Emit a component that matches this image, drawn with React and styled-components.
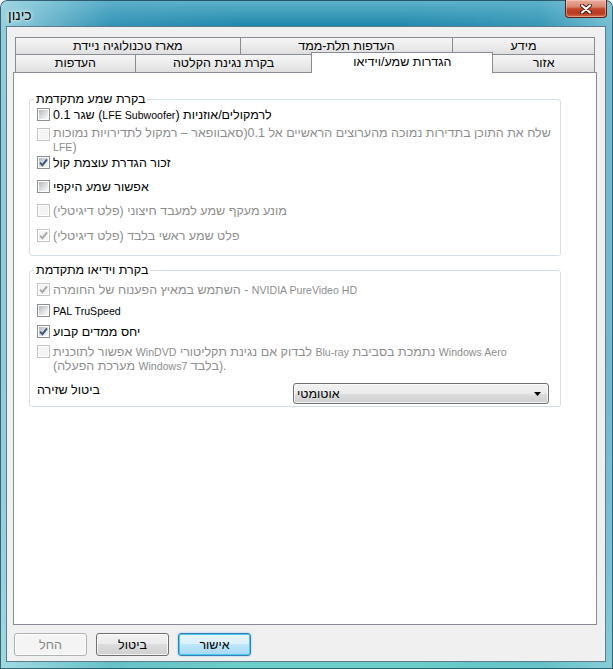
import React from 'react'
import styled, { createGlobalStyle } from 'styled-components'

const GlobalStyle = createGlobalStyle`
  html, body {
    margin: 0;
    padding: 0;
    background: #ffffff;
  }
  body {
    font-family: "Liberation Sans", "DejaVu Sans", sans-serif;
    font-size: 12.5px;
    color: #000000;
  }
`

const Window = styled.div`
  width: 613px;
  height: 669px;
  box-sizing: border-box;
  display: flex;
  flex-direction: column;
  border-radius: 7px 7px 0 0;
  box-shadow: inset 0 0 0 1px rgba(20, 50, 70, 0.7);
  background:
    linear-gradient(90deg, rgba(170, 220, 230, 0.85) 0%, rgba(90, 170, 200, 0.35) 18%, rgba(10, 110, 150, 0) 40%, rgba(10, 110, 150, 0) 65%, rgba(90, 175, 200, 0.4) 88%, rgba(140, 205, 220, 0.8) 100%),
    linear-gradient(180deg, #5fb3cb 0%, #1e86aa 4%, #1b7ea2 30%, #25789c 55%, #3f9fbd 85%, #6fd0c8 100%);
`

const TitleBar = styled.div`
  height: 26px;
  flex: none;
  display: flex;
  justify-content: space-between;
  align-items: flex-start;
  padding: 0 6px 0 8px;
`

const Title = styled.span`
  margin-top: 7px;
  font-size: 14px;
  line-height: 16px;
  color: #000;
  text-shadow: 0 0 6px #ffffff, 0 0 3px rgba(255, 255, 255, 0.9);
`

const CloseButton = styled.div`
  width: 42px;
  height: 18px;
  box-sizing: border-box;
  border: 1px solid #5a2118;
  border-top: none;
  border-radius: 0 0 4px 4px;
  display: flex;
  align-items: center;
  justify-content: center;
  background: linear-gradient(180deg, #e9ad9d 0%, #d9876f 40%, #c2472c 52%, #b53a21 78%, #d66a4c 100%);
  box-shadow: inset 0 0 0 1px rgba(255, 220, 210, 0.45);
`

const Client = styled.div`
  flex: 1;
  margin: 0 7px 7px 6px;
  border: 1px solid #5f7c8c;
  background: #f0f0f0;
  display: flex;
  flex-direction: column;
  padding: 10px 8px 5px 6px;
  min-height: 0;
`

const TabRow = styled.div`
  display: flex;
  align-items: flex-end;
  height: ${p => p.$height}px;
  margin: 0 2px;
`

const Tab = styled.div`
  position: relative;
  box-sizing: border-box;
  width: ${p => p.$width}px;
  height: ${p => (p.$selected ? 21 : p.$height)}px;
  margin-left: ${p => (p.$first ? 0 : -1)}px;
  margin-bottom: ${p => (p.$selected ? -1 : 0)}px;
  z-index: ${p => (p.$selected ? 2 : 1)};
  border: 1px solid #898c95;
  border-bottom: none;
  background: ${p => (p.$selected
    ? '#ffffff'
    : 'linear-gradient(180deg, #f5f5f5 0%, #ececec 50%, #dedede 100%)')};
  text-align: center;
  line-height: ${p => (p.$selected ? 18 : p.$height - 1)}px;
  white-space: nowrap;
`

const Panel = styled.div`
  flex: 1;
  background: #ffffff;
  border: 1px solid #898c95;
  padding: 0 0 0 15px;
`

const Group = styled.fieldset`
  width: 532px;
  box-sizing: border-box;
  margin: ${p => p.$top}px 0 0 0;
  padding: ${p => p.$padTop}px 8px ${p => p.$padBottom}px 7px;
  border: 1px solid #d5dfe5;
  border-radius: 3px;
  min-inline-size: 0;
`

const Legend = styled.legend`
  padding: 0 2px;
  margin-left: -3px;
  line-height: 14px;
`

const Row = styled.div`
  display: flex;
  align-items: flex-start;
  gap: 3px;
  margin-top: ${p => p.$gap || 0}px;
`

const Label = styled.div`
  line-height: 14px;
  white-space: nowrap;
  color: ${p => (p.$disabled ? '#8d8d8d' : '#000000')};
`

const Line = styled.div`
  height: 14px;
`

const Latin = styled.span`
  font-size: 10.6px;
  line-height: 10px;
`

const Box = styled.span`
  flex: none;
  width: 13px;
  height: 13px;
  box-sizing: border-box;
  margin-top: ${p => p.$offset || 0}px;
  padding: 1px;
  border: 1px solid ${p => (p.$disabled ? '#c4c4c4' : '#8e8f8f')};
  background: #ffffff;
`

const BoxFace = styled.span`
  display: block;
  width: 9px;
  height: 9px;
  background: ${p => (p.$disabled
    ? '#f4f4f4'
    : 'linear-gradient(135deg, #b3b7bd 0%, #dfe1e3 55%, #fbfbfb 100%)')};
  overflow: visible;
`

const SelectRow = styled.div`
  display: flex;
  align-items: flex-start;
  margin-top: ${p => p.$gap}px;
`

const Select = styled.div`
  margin-left: auto;
  margin-right: 3px;
  width: 256px;
  height: 21px;
  box-sizing: border-box;
  border: 1px solid #707070;
  border-radius: 3px;
  display: flex;
  align-items: center;
  justify-content: space-between;
  padding: 0 7px 0 3px;
  background: linear-gradient(180deg, #f2f2f2 0%, #ebebeb 50%, #dddddd 50%, #cfcfcf 100%);
  box-shadow: inset 0 0 0 1px rgba(255, 255, 255, 0.7);
`

const ButtonRow = styled.div`
  display: flex;
  gap: 9px;
  margin-top: 8px;
  padding-left: 1px;
`

const Button = styled.div`
  width: 73px;
  height: 23px;
  box-sizing: border-box;
  border-radius: 3px;
  display: flex;
  align-items: center;
  justify-content: center;
  border: 1px solid ${p => (p.$variant === 'disabled' ? '#adb2b5' : p.$variant === 'default' ? '#3c7fb1' : '#707070')};
  color: ${p => (p.$variant === 'disabled' ? '#838383' : '#000000')};
  background: ${p => (p.$variant === 'disabled'
    ? '#f4f4f4'
    : p.$variant === 'default'
      ? 'linear-gradient(180deg, #eaf6fd 0%, #d9f0fc 50%, #bee6fd 50%, #a7d9f5 100%)'
      : 'linear-gradient(180deg, #f2f2f2 0%, #ebebeb 50%, #dddddd 50%, #cfcfcf 100%)')};
  box-shadow: ${p => (p.$variant === 'default'
    ? 'inset 0 0 0 1px #48c8f8, 0 0 2px rgba(60, 160, 230, 0.6)'
    : 'inset 0 0 0 1px rgba(255, 255, 255, 0.75)')};
`

// latin words are set a little smaller, as the dialog font does
const withLatin = text =>
  text.split(/([A-Za-z][A-Za-z0-9\-]*(?: [A-Za-z][A-Za-z0-9\-]*)*)/).map((part, i) =>
    i % 2 ? <Latin key={i}>{part}</Latin> : part
  )

const CheckBox = ({ checked, disabled, offset }) => (
  <Box $disabled={disabled} $offset={offset}>
    <BoxFace $disabled={disabled}>
      {checked && (
        <svg width="9" height="9" viewBox="0 0 9 9" style={{ display: 'block' }}>
          <path
            d="M1 4.6 L3.4 7.2 L8 1.4"
            fill="none"
            stroke={disabled ? '#a9a9a9' : '#3f5580'}
            strokeWidth="1.9"
          />
        </svg>
      )}
    </BoxFace>
  </Box>
)

const Option = ({ gap, checked, disabled, offset, lines }) => (
  <Row $gap={gap}>
    <CheckBox checked={checked} disabled={disabled} offset={offset} />
    <Label $disabled={disabled}>
      {lines.map((l, i) => <Line key={i}>{withLatin(l)}</Line>)}
    </Label>
  </Row>
)

const topTabs = [
  { label: 'מארז טכנולוגיה ניידת', width: 226 },
  { label: 'העדפות תלת-ממד', width: 214 },
  { label: 'מידע', width: 143 },
]

const bottomTabs = [
  { label: 'העדפות', width: 121 },
  { label: 'בקרת נגינת הקלטה', width: 178 },
  { label: 'הגדרות שמע/וידיאו', width: 182, selected: true },
  { label: 'אזור', width: 103 },
]

const audioOptions = [
  { gap: 0, lines: ['שגר 0.1 (LFE Subwoofer) לרמקולים/אוזניות'] },
  {
    gap: 4,
    disabled: true,
    offset: 2,
    lines: ['שלח את התוכן בתדירות נמוכה מהערוצים הראשיים אל 0.1(סאבוופאר – רמקול לתדירויות נמוכות', 'LFE)'],
  },
  { gap: 2, checked: true, lines: ['זכור הגדרת עוצמת קול'] },
  { gap: 10, lines: ['אפשור שמע היקפי'] },
  { gap: 10, disabled: true, lines: ['(פלט דיגיטלי) מונע מעקף שמע למעבד חיצוני'] },
  { gap: 11, disabled: true, checked: true, lines: ['(פלט דיגיטלי) פלט שמע ראשי בלבד'] },
]

const videoOptions = [
  { gap: 0, disabled: true, checked: true, lines: ['השתמש במאיץ הפענוח של החומרה - NVIDIA PureVideo HD'] },
  { gap: 7, lines: ['PAL TruSpeed'] },
  { gap: 7, checked: true, lines: ['יחס ממדים קבוע'] },
  {
    gap: 6,
    disabled: true,
    lines: ['אפשור לתוכנית WinDVD לבדוק אם נגינת תקליטורי Blu-ray נתמכת בסביבת Windows Aero', '(מערכת הפעלה Windows7 בלבד).'],
  },
]

const App = () => (
  <>
    <GlobalStyle />
    <Window>
      <TitleBar>
        <Title>כינון</Title>
        <CloseButton>
          <svg width="12" height="10" viewBox="0 0 12 10">
            <path d="M2 1.5 L10 8.5 M10 1.5 L2 8.5" stroke="#4a1a12" strokeWidth="4" strokeLinecap="round" />
            <path d="M2 1.5 L10 8.5 M10 1.5 L2 8.5" stroke="#ffffff" strokeWidth="2.2" strokeLinecap="round" />
          </svg>
        </CloseButton>
      </TitleBar>
      <Client>
        <TabRow $height={17}>
          {topTabs.map((t, i) => (
            <Tab key={t.label} $width={t.width} $height={17} $first={i === 0}>{t.label}</Tab>
          ))}
        </TabRow>
        <TabRow $height={18}>
          {bottomTabs.map((t, i) => (
            <Tab key={t.label} $width={t.width} $height={18} $first={i === 0} $selected={t.selected}>{t.label}</Tab>
          ))}
        </TabRow>
        <Panel>
          <Group $top={19} $padTop={2} $padBottom={12}>
            <Legend>בקרת שמע מתקדמת</Legend>
            {audioOptions.map((o, i) => <Option key={i} {...o} />)}
          </Group>
          <Group $top={7} $padTop={6} $padBottom={2}>
            <Legend>בקרת וידיאו מתקדמת</Legend>
            {videoOptions.map((o, i) => <Option key={i} {...o} />)}
            <SelectRow $gap={10}>
              <Label>ביטול שזירה</Label>
              <Select>
                <span>אוטומטי</span>
                <svg width="7" height="4" viewBox="0 0 7 4">
                  <path d="M0 0 H7 L3.5 4 Z" fill="#000000" />
                </svg>
              </Select>
            </SelectRow>
          </Group>
        </Panel>
        <ButtonRow>
          <Button $variant="disabled">החל</Button>
          <Button>ביטול</Button>
          <Button $variant="default">אישור</Button>
        </ButtonRow>
      </Client>
    </Window>
  </>
)

export default App
